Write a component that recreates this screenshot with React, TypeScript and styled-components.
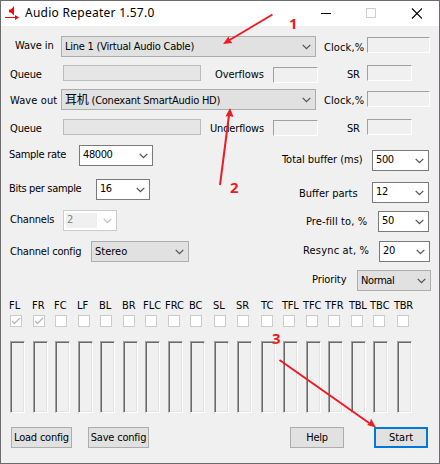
import React from 'react';
import styled, { createGlobalStyle, css } from 'styled-components';

const Global = createGlobalStyle`
  * { box-sizing: border-box; }
  body { margin: 0; background: #f0f0f0; }
`;

const Window = styled.main`
  position: relative;
  width: 440px;
  height: 464px;
  overflow: hidden;
  border: 1px solid #6c6a6c;
  background: #f0f0f0;
  color: #000;
  font: 11px/14px 'DejaVu Sans Condensed', 'DejaVu Sans', 'Noto Sans CJK SC', sans-serif;
  font-stretch: condensed;
  white-space: nowrap;
`;

const TitleBar = styled.header`
  display: flex;
  height: 25px;
  padding-left: 4px;
  background: #fff;
`;

const AppIcon = styled.svg`
  width: 16px;
  height: 16px;
  margin-top: 4px;
`;

const Title = styled.h1`
  flex: 1;
  margin: 2px 0 0 4px;
  font: 400 12px/20px 'Noto Sans', sans-serif;
  letter-spacing: 0.26px;
`;

const WindowButtons = styled.svg`
  width: 101px;
  height: 11px;
  margin: 7px 17px 0 0;
`;

const Row = styled.div<{ $h: number }>`
  display: flex;
  align-items: flex-start;
  height: ${(p) => p.$h}px;
`;

const Columns = styled.div`
  display: flex;
  height: 154px;
`;

const Column = styled.div<{ $w: number }>`
  width: ${(p) => p.$w}px;
`;

interface Placed {
  $ml?: number;
  $mt?: number;
}

const placed = css<Placed>`
  flex: none;
  margin-left: ${(p) => p.$ml ?? 0}px;
  margin-top: ${(p) => p.$mt ?? 0}px;
`;

const Label = styled.span<Placed & { $w: number; $ls?: number }>`
  ${placed}
  width: ${(p) => p.$w}px;
  letter-spacing: ${(p) => p.$ls ?? 0}px;
`;

type Kind = 'list' | 'edit' | 'disabled';
const borders: Record<Kind, string> = { list: '#adadad', edit: '#7a7a7a', disabled: '#cccccc' };

const ComboBox = styled.div<Placed & { $w: number; $kind: Kind; $ls?: number }>`
  ${placed}
  display: flex;
  align-items: center;
  justify-content: space-between;
  width: ${(p) => p.$w}px;
  height: 21px;
  padding: 0 4px 0 2px;
  border: 1px solid ${(p) => borders[p.$kind]};
  background: ${(p) => (p.$kind === 'list' ? '#e1e1e1' : '#fff')};
  color: ${(p) => (p.$kind === 'disabled' ? '#838383' : '#000')};
  letter-spacing: ${(p) => p.$ls ?? 0}px;
`;

const ComboText = styled.span<{ $kind: Kind }>`
  height: 15px;
  min-width: ${(p) => (p.$kind === 'disabled' ? '31px' : 'auto')};
  padding-left: 1px;
  line-height: ${(p) => (p.$kind === 'list' ? 16 : 14)}px;
  background: ${(p) => (p.$kind === 'disabled' ? '#f0f0f0' : 'transparent')};
`;

const Cjk = styled.span`
  font: 12px/14px 'Noto Sans CJK SC', sans-serif;
  letter-spacing: -0.2px;
`;

const Chevron = styled.svg`
  width: 9px;
  height: 6px;
`;

const Progress = styled.div<Placed>`
  ${placed}
  width: 138px;
  height: 16px;
  border: 1px solid #bcbcbc;
  background: #e6e6e6;
`;

const Sunken = styled.div<Placed & { $w: number }>`
  ${placed}
  width: ${(p) => p.$w}px;
  height: 16px;
  border: 1px solid;
  border-color: #a0a0a0 #fff #fff #a0a0a0;
`;

const ChannelStrip = styled.div`
  display: grid;
  grid-template-columns: 23px 22px 23px 22px 23px 22px 23px 22px 24px 23px 24px 22px 23px 22px 23px 22px 24px 24px;
  height: 128px;
  padding-left: 9px;
`;

const Channel = styled.div`
  display: flex;
  flex-direction: column;
  align-items: flex-start;
`;

const ChannelName = styled.span<{ $shift: number; $ls: number }>`
  height: 16px;
  margin-left: ${(p) => p.$shift}px;
  letter-spacing: ${(p) => p.$ls}px;
`;

const CheckBox = styled.span`
  display: flex;
  align-items: center;
  justify-content: center;
  width: 12px;
  height: 12px;
  border: 1px solid #cccccc;
  background: #fff;
`;

const Meter = styled.div`
  width: 15px;
  height: 72px;
  margin-top: 14px;
  border: 1px solid;
  border-color: #a0a0a0 #fff #fff #a0a0a0;
  box-shadow: inset 1px 1px #696969, inset -1px -1px #e3e3e3;
`;

const Button = styled.button<Placed & { $w: number; $ls?: number; $primary?: boolean }>`
  ${placed}
  display: flex;
  align-items: center;
  justify-content: center;
  width: ${(p) => p.$w}px;
  height: 21px;
  padding: 1px 0 0;
  border: ${(p) => (p.$primary ? '2px solid #0078d7' : '1px solid #adadad')};
  background: #e1e1e1;
  color: #000;
  font: inherit;
  letter-spacing: ${(p) => p.$ls ?? 0}px;
`;

const Arrows = styled.svg`
  position: absolute;
  top: -1px;
  left: -1px;
  width: 440px;
  height: 464px;
  pointer-events: none;
`;

const StepNumber = styled.span<{ $x: number; $y: number }>`
  position: absolute;
  left: ${(p) => p.$x - 1}px;
  top: ${(p) => p.$y - 1}px;
  color: #ed1c24;
  font: 700 15px/16px 'Noto Sans', sans-serif;
`;

interface ComboProps {
  w: number;
  ml?: number;
  mt?: number;
  ls?: number;
  kind?: Kind;
  children: React.ReactNode;
}

function Combo({ w, ml, mt, ls, kind = 'edit', children }: ComboProps) {
  return (
    <ComboBox $w={w} $ml={ml} $mt={mt} $ls={ls} $kind={kind}>
      <ComboText $kind={kind}>{children}</ComboText>
      <Chevron viewBox="0 0 9 6">
        <path d="M.7.9 4.5 4.7 8.3.9" fill="none" stroke={kind === 'disabled' ? '#bfbfbf' : '#555'} strokeWidth="1.3" />
      </Chevron>
    </ComboBox>
  );
}

const channels: { name: string; shift?: number; ls?: number }[] = [
  { name: 'FL' }, { name: 'FR' }, { name: 'FC' }, { name: 'LF' }, { name: 'BL' }, { name: 'BR' },
  { name: 'FLC', shift: -2 }, { name: 'FRC', shift: -3 }, { name: 'BC' }, { name: 'SL' }, { name: 'SR' },
  { name: 'TC', shift: 0 }, { name: 'TFL', shift: -1, ls: -0.2 }, { name: 'TFC', ls: -0.1, shift: -3 }, { name: 'TFR', shift: -3 },
  { name: 'TBL', shift: -2, ls: -0.3 }, { name: 'TBC', shift: -3 }, { name: 'TBR', shift: -3, ls: -0.3 },
];

export default function App() {
  return (
    <>
      <Global />
      <Window>
        <TitleBar>
          <AppIcon viewBox="0 0 16 16">
            <path d="M4 4.500h2L9 1v9.500L6 7.500H4z" fill="#f00" />
            <path d="M0 12.500h13" stroke="#f00" />
            <path d="M10 10v5l4-2.500z" fill="#f00" />
          </AppIcon>
          <Title>Audio Repeater 1.57.0</Title>
          <WindowButtons viewBox="0 0 101 11" fill="none">
            <path d="M0 5.500h10" stroke="#000" />
            <path d="M45.500 .5h9v9h-9z" stroke="#ccc" />
            <path d="m91 .5 10 10m0-10-10 10" stroke="#000" strokeWidth="1.1" />
          </WindowButtons>
        </TitleBar>

        <Row $h={39}>
          <Label $w={46} $ml={14} $mt={13} $ls={-0.1}>Wave in</Label>
          <Combo w={255} mt={10} ls={-0.24} kind="list">Line 1 (Virtual Audio Cable)</Combo>
          <Label $w={43} $ml={8} $mt={15} $ls={0.1}>Clock,%</Label>
          <Sunken $w={63} $mt={11} />
        </Row>
        <Row $h={24}>
          <Label $w={53} $ml={9} $mt={3} $ls={-0.15}>Queue</Label>
          <Progress />
          <Label $w={58} $ml={14} $mt={3} $ls={-0.05}>Overflows</Label>
          <Sunken $w={45} $mt={2} />
          <Label $w={20} $ml={29} $mt={3} $ls={-0.3}>SR</Label>
          <Sunken $w={45} />
        </Row>
        <Row $h={30}>
          <Label $w={51} $ml={9} $mt={5} $ls={0.1}>Wave out</Label>
          <Combo w={255} ls={-0.24} kind="list"><Cjk>耳机</Cjk> (Conexant SmartAudio HD)</Combo>
          <Label $w={43} $ml={8} $mt={5} $ls={0.1}>Clock,%</Label>
          <Sunken $w={63} $mt={2} />
        </Row>
        <Row $h={26}>
          <Label $w={53} $ml={9} $mt={3} $ls={-0.15}>Queue</Label>
          <Progress />
          <Label $w={63} $ml={9} $mt={3} $ls={-0.15}>Underflows</Label>
          <Sunken $w={45} $mt={1} />
          <Label $w={20} $ml={29} $mt={3} $ls={-0.3}>SR</Label>
          <Sunken $w={45} />
        </Row>

        <Columns>
          <Column $w={270}>
            <Row $h={34}>
              <Label $w={70} $ml={8} $mt={3} $ls={-0.3}>Sample rate</Label>
              <Combo w={74} ls={-0.4}>48000</Combo>
            </Row>
            <Row $h={31}>
              <Label $w={87} $ml={8} $mt={3} $ls={-0.33}>Bits per sample</Label>
              <Combo w={54} ls={-0.5}>16</Combo>
            </Row>
            <Row $h={31}>
              <Label $w={53} $ml={9} $mt={3} $ls={-0.2}>Channels</Label>
              <Combo w={54} kind="disabled">2</Combo>
            </Row>
            <Row $h={31}>
              <Label $w={81} $ml={9} $mt={4} $ls={-0.2}>Channel config</Label>
              <Combo w={98} kind="list">Stereo</Combo>
            </Row>
          </Column>
          <Column $w={168}>
            <Row $h={37}>
              <Label $w={90} $ml={11} $mt={8} $ls={-0.05}>Total buffer (ms)</Label>
              <Combo w={57} mt={5} ls={-0.4}>500</Combo>
            </Row>
            <Row $h={29}>
              <Label $w={73} $ml={28} $mt={5}>Buffer parts</Label>
              <Combo w={57} ls={-0.4}>12</Combo>
            </Row>
            <Row $h={30}>
              <Label $w={72} $ml={35} $mt={4} $ls={0.1}>Pre-fill to, %</Label>
              <Combo w={51} ls={-0.4}>50</Combo>
            </Row>
            <Row $h={29}>
              <Label $w={76} $ml={32} $mt={3} $ls={0.18}>Resync at, %</Label>
              <Combo w={51} ls={-0.4}>20</Combo>
            </Row>
            <Row $h={29}>
              <Label $w={45} $ml={41} $mt={3} $ls={-0.1}>Priority</Label>
              <Combo w={74} ls={-0.4} kind="list">Normal</Combo>
            </Row>
          </Column>
        </Columns>

        <ChannelStrip>
          {channels.map(({ name, shift = -1, ls = 0 }, i) => (
            <Channel key={name}>
              <ChannelName $shift={shift} $ls={ls}>{name}</ChannelName>
              <CheckBox>
                {i < 2 && (
                  <svg width="10" height="10" viewBox="0 0 10 10">
                    <path d="m1 5 2.500 2.500L9 2" fill="none" stroke="#bbb" strokeWidth="1.4" />
                  </svg>
                )}
              </CheckBox>
              <Meter />
            </Channel>
          ))}
        </ChannelStrip>

        <Row $h={36}>
          <Button $w={61} $ml={10} $ls={-0.2}>Load config</Button>
          <Button $w={61} $ml={16} $ls={-0.2}>Save config</Button>
          <Button $w={54} $ml={141} $ls={-0.3}>Help</Button>
          <Button $w={54} $ml={30} $primary>Start</Button>
        </Row>

        <Arrows viewBox="0 0 440 464" stroke="#ed1c24" fill="#ed1c24">
          <path d="M272.500 14.500 228 41M220 185l9-70M279.500 360l91 64" strokeWidth="2" />
          <path d="m223 44 5.500-7.500 1 3.500 3 3zM230 108l3.500 9-4-1-4 .5zM376 427.500l-9-2.500 3-2.500 1-4z" stroke="none" />
        </Arrows>
        <StepNumber $x={289} $y={15}>1</StepNumber>
        <StepNumber $x={230} $y={179}>2</StepNumber>
        <StepNumber $x={272} $y={330}>3</StepNumber>
      </Window>
    </>
  );
}
